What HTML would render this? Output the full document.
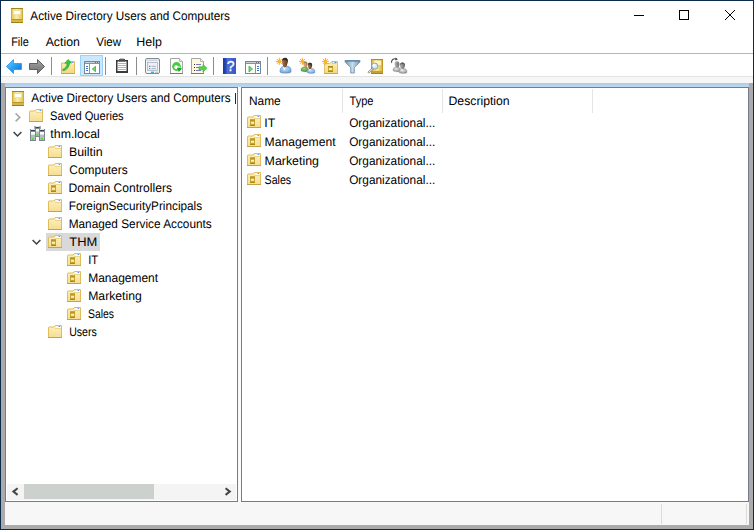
<!DOCTYPE html>
<html><head><meta charset="utf-8"><title>Active Directory Users and Computers</title>
<style>
html,body{margin:0;padding:0;background:#fff;}
body{width:754px;height:530px;position:relative;overflow:hidden;font-family:"Liberation Sans",sans-serif;font-size:12px;color:#000;}
.abs{position:absolute;}
.t{position:absolute;white-space:nowrap;font-size:12.4px;line-height:14px;height:14px;transform-origin:0 0;display:block;text-rendering:geometricPrecision;}
svg{position:absolute;overflow:visible;}
</style></head><body>

<div class="abs" style="left:0;top:0;width:754px;height:530px;background:#0b2b4a;"></div>
<div class="abs" style="left:1px;top:1px;width:752px;height:528px;background:#fff;"></div>
<div class="abs" style="left:1px;top:53px;width:752px;height:1px;background:#b4b8b8;"></div>
<div class="abs" style="left:1px;top:76px;width:752px;height:1px;background:#e2e4e2;"></div>
<div class="abs" style="left:1px;top:77px;width:752px;height:6px;background:#f6f6f6;"></div>
<div class="abs" style="left:1px;top:83px;width:752px;height:446px;background:#ababab;"></div>
<div class="abs" style="left:5px;top:83px;width:744px;height:4px;background:linear-gradient(#aacde9,#bdd8f3);"></div>
<div class="abs" style="left:5px;top:87px;width:744px;height:438px;background:#f7f7f7;"></div>
<div class="abs" style="left:238px;top:87px;width:3px;height:414px;background:#fbfbfb;"></div>
<div class="abs" style="left:5px;top:87px;width:233px;height:415px;background:#fff;border:1px solid #767b8c;box-sizing:border-box;"></div>
<div class="abs" style="left:241px;top:87px;width:508px;height:415px;background:#fff;border:1px solid #767b8c;box-sizing:border-box;"></div>
<div class="abs" style="left:661px;top:504px;width:1px;height:20px;background:#d9dcd9;"></div>
<div class="abs" style="left:746px;top:504px;width:1px;height:20px;background:#d9dcd9;"></div>
<svg style="left:11px;top:8px" width="12" height="15" viewBox="0 0 12 15"><defs><linearGradient id="bk" x1="0" y1="0" x2="1" y2="0"><stop offset="0" stop-color="#e4cc5e"/><stop offset="0.45" stop-color="#f8eeaa"/><stop offset="1" stop-color="#e2c858"/></linearGradient></defs><rect x="0" y="0" width="12" height="15" fill="#cfae3c"/><rect x="0" y="0" width="12" height="1" fill="#a5821a"/><rect x="1" y="1" width="10" height="10" fill="url(#bk)"/><rect x="2.5" y="2.5" width="7" height="4" fill="#ffffff" stroke="#efe2a0" stroke-width="1"/><rect x="0.5" y="11" width="11" height="1" fill="#b8962a"/><rect x="1" y="12" width="10" height="2" fill="#d6b646"/><rect x="0" y="14" width="12" height="1" fill="#a08018"/></svg>
<span class="t" style="left:30px;top:9px;transform:translateX(0.37px) scaleX(0.9474);">Active Directory Users and Computers</span>
<svg style="left:633px;top:9px" width="110" height="14" viewBox="0 0 110 14"><g fill="none" stroke="#000" stroke-width="1"><path d="M1 6.5H11"/><rect x="46.5" y="1.5" width="9" height="9"/><path d="M92 1L102 11M102 1L92 11"/></g></svg>
<span class="t" style="left:11px;top:35px;transform:translateX(0.20px) scaleX(0.8786);">File</span>
<span class="t" style="left:45px;top:35px;transform:translateX(0.66px) scaleX(0.9929);">Action</span>
<span class="t" style="left:96px;top:35px;transform:translateX(0.15px) scaleX(0.9329);">View</span>
<span class="t" style="left:136px;top:35px;transform:translateX(0.30px) scaleX(1.0051);">Help</span>
<svg style="left:0;top:54px" width="754" height="23" viewBox="0 54 754 23">
<defs>
<linearGradient id="gb" x1="0" y1="0" x2="1" y2="1"><stop offset="0" stop-color="#7ad0ff"/><stop offset="0.5" stop-color="#28a0f4"/><stop offset="1" stop-color="#0868cc"/></linearGradient>
<linearGradient id="gg" x1="0" y1="0" x2="0" y2="1"><stop offset="0" stop-color="#a8a8a8"/><stop offset="0.5" stop-color="#8a8a8a"/><stop offset="1" stop-color="#707070"/></linearGradient>
<linearGradient id="gf" x1="0" y1="0" x2="0" y2="1"><stop offset="0" stop-color="#fdf0b8"/><stop offset="1" stop-color="#f1d780"/></linearGradient>
<linearGradient id="gh" x1="0" y1="0" x2="1" y2="0"><stop offset="0" stop-color="#1b3a9c"/><stop offset="0.25" stop-color="#2a4cb8"/><stop offset="0.3" stop-color="#4f70d6"/><stop offset="1" stop-color="#3558c8"/></linearGradient>
<linearGradient id="gfu" x1="0" y1="0" x2="1" y2="0"><stop offset="0" stop-color="#6f95b4"/><stop offset="0.5" stop-color="#c8dcea"/><stop offset="1" stop-color="#6f95b4"/></linearGradient>
<linearGradient id="gbk" x1="0" y1="0" x2="1" y2="0"><stop offset="0" stop-color="#d9b640"/><stop offset="0.5" stop-color="#f7e79a"/><stop offset="1" stop-color="#d9b640"/></linearGradient>
</defs>
<rect x="51" y="57" width="1" height="18" fill="#8c8c8c"/>
<rect x="105" y="57" width="1" height="18" fill="#8c8c8c"/>
<rect x="136" y="57" width="1" height="18" fill="#8c8c8c"/>
<rect x="213" y="57" width="1" height="18" fill="#8c8c8c"/>
<rect x="267" y="57" width="1" height="18" fill="#8c8c8c"/>
<path d="M6.5 66.5L13.5 59.5V63.5H21.5V69.5H13.5V73.5Z" fill="url(#gb)" stroke="#3aa0f0" stroke-width="1" stroke-linejoin="round"/>
<path d="M44.5 66.5L37.5 59.5V63.5H29.5V69.5H37.5V73.5Z" fill="url(#gg)" stroke="#606060" stroke-width="1" stroke-linejoin="round"/>
<path d="M61.5 63H67.5L69 61.5H74.5V73.5H61.5Z" fill="url(#gf)" stroke="#e0bc60" stroke-width="1"/><rect x="61" y="73" width="14" height="1" fill="#cfa848"/>
<rect x="70.5" y="62" width="3" height="1.5" fill="#fff"/><rect x="72" y="62" width="1.5" height="1" fill="#5a9cf0"/>
<path d="M62.6 69.4C65.4 68.4 66.9 66.4 67.2 63.3H64.8L68 59.4L71.7 63H69.6C69.3 67 66.8 70 63 70.8Z" fill="#3cc43c" stroke="#2a9e2a" stroke-width="0.6"/>
<rect x="80.5" y="55.5" width="22" height="20" fill="#cce8ff" stroke="#99d1ff" stroke-width="1"/>
<rect x="84.5" y="61.5" width="15" height="12" fill="#fff" stroke="#7a8692" stroke-width="1"/>
<rect x="85" y="62" width="14" height="1" fill="#c8ced6"/><rect x="85" y="63" width="14" height="1" fill="#8a94a0"/><rect x="95" y="62" width="1" height="1" fill="#6a7480"/><rect x="97" y="62" width="1" height="1" fill="#6a7480"/>
<rect x="89" y="64" width="1" height="9" fill="#8a96a2"/>
<rect x="86" y="66" width="2" height="1" fill="#3a78d0"/><rect x="86" y="68" width="2" height="1" fill="#3a78d0"/><rect x="86" y="70" width="2" height="1" fill="#3a78d0"/>
<path d="M95.5 66.3V71.7L92.3 69Z" fill="#7ed27e" stroke="#36b036" stroke-width="0.8"/>
<rect x="116.75" y="60.75" width="10.5" height="11.5" fill="#fff" stroke="#3a3a3a" stroke-width="1.5"/>
<rect x="117" y="71" width="10" height="1.6" fill="#3a3a3a"/>
<rect x="119" y="59" width="6" height="2.4" fill="#4a4a4a"/><rect x="120" y="58.6" width="4" height="1" fill="#6a6a6a"/>
<g fill="#b4b4b4"><rect x="118" y="63" width="8" height="1"/><rect x="118" y="65" width="8" height="1"/><rect x="118" y="67" width="8" height="1"/><rect x="118" y="69" width="8" height="1"/></g>
<rect x="145.5" y="58.5" width="14" height="15" rx="1.5" fill="#f4f6f8" stroke="#808a96" stroke-width="1"/>
<rect x="146.5" y="59.5" width="12" height="1.6" fill="#d0d6de"/>
<rect x="147.5" y="62.5" width="10" height="8" fill="#eef1f5" stroke="#aab2be" stroke-width="0.8"/>
<rect x="149" y="65.7" width="1.3" height="1.3" fill="#1e90ff"/><rect x="149" y="68" width="1.3" height="1.3" fill="#909090"/>
<rect x="151.5" y="65.8" width="4.5" height="1" fill="#a8b0bc"/><rect x="151.5" y="68.1" width="4.5" height="1" fill="#a8b0bc"/>
<rect x="151" y="71.6" width="3" height="1.4" fill="#20b8f0"/><rect x="155" y="71.6" width="3" height="1.4" fill="#c8c8c8"/>
<path d="M170.5 58.5H179.5L182.5 61.5V73.5H170.5Z" fill="#fff" stroke="#a4a4a4" stroke-width="1"/><path d="M179.5 58.5V61.5H182.5" fill="#f0f0f0" stroke="#a4a4a4" stroke-width="0.8"/><rect x="170" y="73" width="13" height="1" fill="#7a7a7a"/>
<circle cx="176.5" cy="66.5" r="4.4" fill="#44cc44"/><circle cx="176.2" cy="67.2" r="1.9" fill="#fff"/><path d="M178.3 66.2L180 66.6L179.5 68L178 67.6Z" fill="#fff"/><path d="M177 67.6L182.2 68.6L178.8 72Z" fill="#1fa21f"/>
<path d="M191.5 58.5H200.5L203.5 61.5V73.5H191.5Z" fill="#fdf9de" stroke="#a4a4a4" stroke-width="1"/><path d="M200.5 58.5V61.5H203.5" fill="#f0f0f0" stroke="#a4a4a4" stroke-width="0.8"/><rect x="191" y="73" width="13" height="1" fill="#7a7a7a"/>
<g fill="#303030"><rect x="194" y="64" width="1" height="1"/><rect x="194" y="67" width="1" height="1"/><rect x="194" y="70" width="1" height="1"/></g>
<g fill="#7878c0"><rect x="196" y="64" width="5" height="1"/><rect x="196" y="67" width="5" height="1"/><rect x="196" y="70" width="5" height="1"/></g>
<path d="M199 66.7H203V64.5L207 68.2L203 72V69.8H199Z" fill="#5ad048" stroke="#35b030" stroke-width="0.6"/>
<rect x="223" y="58" width="13" height="16" fill="url(#gh)"/>
<text x="230.6" y="71.3" font-family="Liberation Sans, sans-serif" font-size="14" fill="#fff" text-anchor="middle" stroke="#fff" stroke-width="0.3">?</text>
<rect x="245.5" y="61.5" width="15" height="12" fill="#fff" stroke="#7a8692" stroke-width="1"/>
<rect x="246" y="62" width="14" height="1" fill="#c8ced6"/><rect x="246" y="63" width="14" height="1" fill="#8a94a0"/><rect x="256" y="62" width="1" height="1" fill="#6a7480"/><rect x="258" y="62" width="1" height="1" fill="#6a7480"/>
<rect x="255" y="64" width="1" height="9" fill="#8a96a2"/>
<rect x="257" y="66" width="2" height="1" fill="#3a78d0"/><rect x="257" y="68" width="2" height="1" fill="#3a78d0"/><rect x="257" y="70" width="2" height="1" fill="#3a78d0"/>
<path d="M249 66V72L252.5 69Z" fill="#7ed27e" stroke="#36b036" stroke-width="0.8"/>
<defs><radialGradient id="rb" cx="0.45" cy="0.35" r="0.75"><stop offset="0" stop-color="#c4dcf6"/><stop offset="0.6" stop-color="#8ab6e6"/><stop offset="1" stop-color="#5a86be"/></radialGradient><radialGradient id="rg" cx="0.45" cy="0.35" r="0.75"><stop offset="0" stop-color="#9ad07a"/><stop offset="0.6" stop-color="#5fa848"/><stop offset="1" stop-color="#3a7a2c"/></radialGradient><linearGradient id="fc" x1="0" y1="0" x2="1" y2="0"><stop offset="0" stop-color="#b07a48"/><stop offset="1" stop-color="#5a3a22"/></linearGradient><linearGradient id="fc2" x1="0" y1="0" x2="1" y2="0"><stop offset="0" stop-color="#e8c090"/><stop offset="1" stop-color="#a87a50"/></linearGradient></defs>
<path d="M280 72C279.6 68.5 281.5 66.3 284 66.3H287.5C290.3 66.3 291.6 69 291 72C290.5 73.6 280.5 73.6 280 72Z" fill="url(#rb)" stroke="#5a88c0" stroke-width="0.5"/>
<path d="M283 66.8L284.3 71L285.8 66.8Z" fill="#fff"/>
<path d="M282 62C281.6 59.5 283 58 285 58C287.2 58 288 59.8 287.6 62.5C287.3 65 286.3 67.4 284.8 67.4C283.3 67.4 282.3 65 282 62Z" fill="url(#fc)"/>
<path d="M282.3 61C282 58.6 283.5 57.8 285.2 57.8C287.6 57.8 288.4 60 287.6 63.4C287.5 61 286.5 60 285 60C283.8 60 283 60.3 282.3 61Z" fill="#2c2c2c"/>
<g stroke="#f2a21c" stroke-width="0.9" stroke-linecap="round"><path d="M276.2 61.4H282.40000000000003M279.3 58.3V64.5M277.1 59.199999999999996L281.5 63.6M277.1 63.6L281.5 59.199999999999996"/></g><circle cx="279.3" cy="61.4" r="1.7" fill="#f8b430"/>
<path d="M301 70.6C300.8 68.3 302 67 304 67H306C307.5 67 308 68.5 308 71C307 72 302 72 301 70.6Z" fill="url(#rg)" stroke="#3f8a30" stroke-width="0.4"/>
<path d="M303.2 64C303 62.6 304 61.7 305.3 61.7C306.8 61.7 307.6 62.8 307.4 64.4C307.2 66 306.4 67.6 305.3 67.6C304.2 67.6 303.4 66 303.2 64Z" fill="url(#fc2)"/><path d="M303.2 63.6C303.2 62 304.2 61.5 305.4 61.5C306.8 61.5 307.7 62.6 307.4 64C306.8 63 305 62.6 303.2 63.6Z" fill="#a08040"/>
<path d="M307 72.2C306.7 70 307.8 68.7 309.5 68.7H312.2C314.2 68.7 315.2 70.3 314.8 72.4C314.3 73.7 307.5 73.7 307 72.2Z" fill="url(#rb)" stroke="#5a88c0" stroke-width="0.5"/>
<path d="M309.2 69L310 71.6L311 69Z" fill="#fff"/>
<path d="M307.8 65.5C307.6 64 308.6 63 310 63C311.5 63 312.3 64.2 312 66C311.8 67.6 311 69.2 310 69.2C309 69.2 308 67.4 307.8 65.5Z" fill="url(#fc)"/><path d="M307.9 65C307.7 63.4 308.8 62.8 310.1 62.8C311.8 62.8 312.6 64.2 312 66.6C311.9 65 311.2 64.3 310 64.3C309.2 64.3 308.5 64.5 307.9 65Z" fill="#2c2c2c"/>
<g stroke="#f2a21c" stroke-width="0.9" stroke-linecap="round"><path d="M299.29999999999995 61.4H305.5M302.4 58.3V64.5M300.2 59.199999999999996L304.59999999999997 63.6M300.2 63.6L304.59999999999997 59.199999999999996"/></g><circle cx="302.4" cy="61.4" r="1.7" fill="#f8b430"/>
<path d="M324.5 63.5H330L331.5 61.5H337.5V73.5H324.5Z" fill="url(#gf)" stroke="#e2c064" stroke-width="1"/><rect x="324" y="73" width="14" height="1" fill="#cfa848"/>
<rect x="332.5" y="61.8" width="4" height="1.8" fill="#fff" stroke="#8aa0c0" stroke-width="0.5"/><rect x="334.5" y="62" width="1.5" height="1" fill="#4a90e8"/>
<rect x="328" y="66" width="5" height="6" fill="#c8a428"/><rect x="328" y="66" width="5" height="1" fill="#a88a18"/><rect x="328" y="71" width="5" height="1" fill="#a88a18"/><rect x="329" y="68" width="3" height="2" fill="#fbf3b8"/>
<g stroke="#f2a21c" stroke-width="0.9" stroke-linecap="round"><path d="M322.29999999999995 61.4H328.5M325.4 58.3V64.5M323.2 59.199999999999996L327.59999999999997 63.6M323.2 63.6L327.59999999999997 59.199999999999996"/></g><circle cx="325.4" cy="61.4" r="1.7" fill="#f8b430"/>
<path d="M345 60.5H360V62L354.3 67.5V73H350.7V67.5L345 62Z" fill="url(#gfu)" stroke="#6a8cab" stroke-width="0.8"/>
<rect x="345.5" y="60.3" width="14" height="1.4" fill="#5f86a8"/>
<rect x="371.5" y="59.5" width="11" height="14" fill="url(#gbk)" stroke="#c09a24" stroke-width="1"/><rect x="371" y="59" width="12" height="1" fill="#b08c1c"/>
<rect x="374" y="61" width="7" height="4" fill="#fbf3c0"/><rect x="372" y="71" width="10" height="2" fill="#c9a030"/><rect x="371" y="73" width="12" height="1" fill="#a88418"/>
<path d="M368.8 72.2L372.6 68.8" stroke="#8a8a90" stroke-width="2.2" stroke-linecap="round"/><path d="M368.9 72.1L372.5 68.9" stroke="#f0f0f4" stroke-width="1" stroke-linecap="round"/>
<circle cx="374.8" cy="66.1" r="3" fill="#d8ecf8" stroke="#98a0a8" stroke-width="1"/><circle cx="374" cy="65.2" r="1.4" fill="#f4fbff"/>
<defs><radialGradient id="ry" cx="0.45" cy="0.35" r="0.75"><stop offset="0" stop-color="#e4e4e4"/><stop offset="0.6" stop-color="#b0b0b0"/><stop offset="1" stop-color="#808080"/></radialGradient><linearGradient id="fy" x1="0" y1="0" x2="1" y2="0"><stop offset="0" stop-color="#b8b8b8"/><stop offset="1" stop-color="#6a6a6a"/></linearGradient></defs>
<g transform="translate(92 0)">
<path d="M301 70.6C300.8 68.3 302 67 304 67H306C307.5 67 308 68.5 308 71C307 72 302 72 301 70.6Z" fill="url(#ry)" stroke="#808080" stroke-width="0.4"/>
<path d="M302.6 64C302.4 62.4 303.6 61.3 305 61.3C306.6 61.3 307.6 62.6 307.4 64.4C307.2 66 306.4 67.6 305 67.6C303.8 67.6 302.8 66 302.6 64Z" fill="url(#fy)"/>
<path d="M307 72.2C306.7 70 307.8 68.7 309.5 68.7H312.2C314.2 68.7 315.2 70.3 314.8 72.4C314.3 73.7 307.5 73.7 307 72.2Z" fill="url(#ry)" stroke="#858585" stroke-width="0.5"/>
<path d="M309.2 69L310 71.6L311 69Z" fill="#fff"/>
<path d="M307.8 65.5C307.6 63.8 308.8 62.6 310.4 62.6C312.2 62.6 313.2 64 312.9 66C312.6 67.8 311.6 69.2 310.4 69.2C309.2 69.2 308 67.4 307.8 65.5Z" fill="url(#fy)"/><path d="M308 65C307.8 63.2 309 62.4 310.5 62.4C312.4 62.4 313.4 64 312.8 66.6C312.6 65 311.8 64 310.4 64C309.4 64 308.6 64.4 308 65Z" fill="#5a5a5a"/>
</g>
<path d="M391.6 62.8C391 60 393.6 58 396.4 59" fill="none" stroke="#4a4a4a" stroke-width="1.1"/><path d="M395.6 57.4L398 59.6L395.2 60.6Z" fill="#4a4a4a"/>
</svg>
<svg style="left:12px;top:91px" width="12" height="15" viewBox="0 0 12 15"><defs><linearGradient id="bk" x1="0" y1="0" x2="1" y2="0"><stop offset="0" stop-color="#e4cc5e"/><stop offset="0.45" stop-color="#f8eeaa"/><stop offset="1" stop-color="#e2c858"/></linearGradient></defs><rect x="0" y="0" width="12" height="15" fill="#cfae3c"/><rect x="0" y="0" width="12" height="1" fill="#a5821a"/><rect x="1" y="1" width="10" height="10" fill="url(#bk)"/><rect x="2.5" y="2.5" width="7" height="4" fill="#ffffff" stroke="#efe2a0" stroke-width="1"/><rect x="0.5" y="11" width="11" height="1" fill="#b8962a"/><rect x="1" y="12" width="10" height="2" fill="#d6b646"/><rect x="0" y="14" width="12" height="1" fill="#a08018"/></svg>
<span class="t" style="left:31px;top:91px;transform:translateX(0.37px) scaleX(0.9450);">Active Directory Users and Computers</span>
<div class="abs" style="left:235px;top:93px;width:1px;height:11px;background:#4a104a;"></div>
<svg style="left:14px;top:112px" width="8" height="11" viewBox="0 0 8 11"><path d="M1.6 1.4L5.8 5.4L1.6 9.4" fill="none" stroke="#a6a6a6" stroke-width="1.5"/></svg>
<svg style="left:29px;top:109px" width="14" height="13" viewBox="0 0 14 13"><defs><linearGradient id="fo" x1="0" y1="0" x2="0" y2="1"><stop offset="0" stop-color="#fdf1c0"/><stop offset="1" stop-color="#f6de92"/></linearGradient></defs><path d="M0.5 2.6Q0.5 2 1.1 2H6L7.2 0.5H13.5V12.5H0.5Z" fill="url(#fo)" stroke="#e0bc5e" stroke-width="1"/><rect x="0" y="12" width="14" height="1" fill="#c9a244"/><rect x="8.5" y="1" width="4.5" height="2" fill="#fffdf0"/><rect x="10.6" y="1" width="1.6" height="1" fill="#5a9cf0"/><path d="M7 3.5H13" stroke="#ead080" stroke-width="0.8" fill="none"/></svg>
<span class="t" style="left:50px;top:109px;transform:translateX(0.08px) scaleX(0.8977);">Saved Queries</span>
<svg style="left:13px;top:131px" width="10" height="7" viewBox="0 0 10 7"><path d="M0.6 1L4.5 5L8.4 1" fill="none" stroke="#404040" stroke-width="1.5"/></svg>
<svg style="left:30px;top:126px" width="15" height="15" viewBox="0 0 15 15"><rect x="4.5" y="0" width="6" height="11" fill="#9aa2aa"/><rect x="5.0" y="0.5" width="5" height="10" fill="#b4bcc4" stroke="#7c868e" stroke-width="1"/><rect x="5.5" y="0" width="4" height="1" fill="#e4e8ea"/><rect x="5.5" y="1" width="4" height="1.4" fill="#3c444c"/><rect x="5.5" y="3" width="4" height="2.6" fill="#fbfcfc"/><rect x="6.5" y="8" width="2" height="2" fill="#58e030"/><rect x="0" y="3" width="6" height="12" fill="#9aa2aa"/><rect x="0.5" y="3.5" width="5" height="11" fill="#b4bcc4" stroke="#7c868e" stroke-width="1"/><rect x="1" y="3" width="4" height="1" fill="#e4e8ea"/><rect x="1" y="4" width="4" height="1.4" fill="#3c444c"/><rect x="1" y="6" width="4" height="2.6" fill="#fbfcfc"/><rect x="2" y="12" width="2" height="2" fill="#58e030"/><rect x="9" y="3" width="6" height="12" fill="#9aa2aa"/><rect x="9.5" y="3.5" width="5" height="11" fill="#b4bcc4" stroke="#7c868e" stroke-width="1"/><rect x="10" y="3" width="4" height="1" fill="#e4e8ea"/><rect x="10" y="4" width="4" height="1.4" fill="#3c444c"/><rect x="10" y="6" width="4" height="2.6" fill="#fbfcfc"/><rect x="11" y="12" width="2" height="2" fill="#58e030"/></svg>
<span class="t" style="left:50px;top:127px;transform:translateX(0.33px) scaleX(0.9969);">thm.local</span>
<svg style="left:48px;top:145px" width="14" height="13" viewBox="0 0 14 13"><defs><linearGradient id="fo" x1="0" y1="0" x2="0" y2="1"><stop offset="0" stop-color="#fdf1c0"/><stop offset="1" stop-color="#f6de92"/></linearGradient></defs><path d="M0.5 2.6Q0.5 2 1.1 2H6L7.2 0.5H13.5V12.5H0.5Z" fill="url(#fo)" stroke="#e0bc5e" stroke-width="1"/><rect x="0" y="12" width="14" height="1" fill="#c9a244"/><rect x="8.5" y="1" width="4.5" height="2" fill="#fffdf0"/><rect x="10.6" y="1" width="1.6" height="1" fill="#5a9cf0"/><path d="M7 3.5H13" stroke="#ead080" stroke-width="0.8" fill="none"/></svg>
<span class="t" style="left:68px;top:145px;transform:translateX(0.88px) scaleX(0.9977);">Builtin</span>
<svg style="left:48px;top:163px" width="14" height="13" viewBox="0 0 14 13"><defs><linearGradient id="fo" x1="0" y1="0" x2="0" y2="1"><stop offset="0" stop-color="#fdf1c0"/><stop offset="1" stop-color="#f6de92"/></linearGradient></defs><path d="M0.5 2.6Q0.5 2 1.1 2H6L7.2 0.5H13.5V12.5H0.5Z" fill="url(#fo)" stroke="#e0bc5e" stroke-width="1"/><rect x="0" y="12" width="14" height="1" fill="#c9a244"/><rect x="8.5" y="1" width="4.5" height="2" fill="#fffdf0"/><rect x="10.6" y="1" width="1.6" height="1" fill="#5a9cf0"/><path d="M7 3.5H13" stroke="#ead080" stroke-width="0.8" fill="none"/></svg>
<span class="t" style="left:69px;top:163px;transform:translateX(0.27px) scaleX(0.9641);">Computers</span>
<svg style="left:48px;top:181px" width="14" height="13" viewBox="0 0 14 13"><path d="M0.5 2.6Q0.5 2 1.1 2H6L7.2 0.5H13.5V12.5H0.5Z" fill="url(#fo)" stroke="#e0bc5e" stroke-width="1"/><rect x="0" y="12" width="14" height="1" fill="#c9a244"/><rect x="8.5" y="1" width="4.5" height="2" fill="#fffdf0"/><rect x="10.6" y="1" width="1.6" height="1" fill="#5a9cf0"/><path d="M7 3.5H13" stroke="#ead080" stroke-width="0.8" fill="none"/><rect x="3" y="4.5" width="5" height="6.5" fill="#c6a42e"/><rect x="3" y="4.5" width="5" height="1" fill="#a88a1c"/><rect x="3" y="10" width="5" height="1" fill="#a88a1c"/><rect x="4" y="6.8" width="3" height="2" fill="#fbf3b8"/></svg>
<span class="t" style="left:68px;top:181px;transform:translateX(0.61px) scaleX(0.9744);">Domain Controllers</span>
<svg style="left:48px;top:199px" width="14" height="13" viewBox="0 0 14 13"><defs><linearGradient id="fo" x1="0" y1="0" x2="0" y2="1"><stop offset="0" stop-color="#fdf1c0"/><stop offset="1" stop-color="#f6de92"/></linearGradient></defs><path d="M0.5 2.6Q0.5 2 1.1 2H6L7.2 0.5H13.5V12.5H0.5Z" fill="url(#fo)" stroke="#e0bc5e" stroke-width="1"/><rect x="0" y="12" width="14" height="1" fill="#c9a244"/><rect x="8.5" y="1" width="4.5" height="2" fill="#fffdf0"/><rect x="10.6" y="1" width="1.6" height="1" fill="#5a9cf0"/><path d="M7 3.5H13" stroke="#ead080" stroke-width="0.8" fill="none"/></svg>
<span class="t" style="left:68px;top:199px;transform:translateX(0.71px) scaleX(0.9496);">ForeignSecurityPrincipals</span>
<svg style="left:48px;top:217px" width="14" height="13" viewBox="0 0 14 13"><defs><linearGradient id="fo" x1="0" y1="0" x2="0" y2="1"><stop offset="0" stop-color="#fdf1c0"/><stop offset="1" stop-color="#f6de92"/></linearGradient></defs><path d="M0.5 2.6Q0.5 2 1.1 2H6L7.2 0.5H13.5V12.5H0.5Z" fill="url(#fo)" stroke="#e0bc5e" stroke-width="1"/><rect x="0" y="12" width="14" height="1" fill="#c9a244"/><rect x="8.5" y="1" width="4.5" height="2" fill="#fffdf0"/><rect x="10.6" y="1" width="1.6" height="1" fill="#5a9cf0"/><path d="M7 3.5H13" stroke="#ead080" stroke-width="0.8" fill="none"/></svg>
<span class="t" style="left:68px;top:217px;transform:translateX(0.72px) scaleX(0.9523);">Managed Service Accounts</span>
<div class="abs" style="left:46px;top:233px;width:54px;height:18px;background:#d9d9d9;"></div>
<svg style="left:32px;top:239px" width="10" height="7" viewBox="0 0 10 7"><path d="M0.6 1L4.5 5L8.4 1" fill="none" stroke="#404040" stroke-width="1.5"/></svg>
<svg style="left:48px;top:235px" width="14" height="13" viewBox="0 0 14 13"><path d="M0.5 2.6Q0.5 2 1.1 2H6L7.2 0.5H13.5V12.5H0.5Z" fill="url(#fo)" stroke="#e0bc5e" stroke-width="1"/><rect x="0" y="12" width="14" height="1" fill="#c9a244"/><rect x="8.5" y="1" width="4.5" height="2" fill="#fffdf0"/><rect x="10.6" y="1" width="1.6" height="1" fill="#5a9cf0"/><path d="M7 3.5H13" stroke="#ead080" stroke-width="0.8" fill="none"/><rect x="3" y="4.5" width="5" height="6.5" fill="#c6a42e"/><rect x="3" y="4.5" width="5" height="1" fill="#a88a1c"/><rect x="3" y="10" width="5" height="1" fill="#a88a1c"/><rect x="4" y="6.8" width="3" height="2" fill="#fbf3b8"/></svg>
<span class="t" style="left:69px;top:235px;transform:translateX(0.29px) scaleX(1.0413);">THM</span>
<svg style="left:67px;top:253px" width="14" height="13" viewBox="0 0 14 13"><path d="M0.5 2.6Q0.5 2 1.1 2H6L7.2 0.5H13.5V12.5H0.5Z" fill="url(#fo)" stroke="#e0bc5e" stroke-width="1"/><rect x="0" y="12" width="14" height="1" fill="#c9a244"/><rect x="8.5" y="1" width="4.5" height="2" fill="#fffdf0"/><rect x="10.6" y="1" width="1.6" height="1" fill="#5a9cf0"/><path d="M7 3.5H13" stroke="#ead080" stroke-width="0.8" fill="none"/><rect x="3" y="4.5" width="5" height="6.5" fill="#c6a42e"/><rect x="3" y="4.5" width="5" height="1" fill="#a88a1c"/><rect x="3" y="10" width="5" height="1" fill="#a88a1c"/><rect x="4" y="6.8" width="3" height="2" fill="#fbf3b8"/></svg>
<span class="t" style="left:88px;top:253px;transform:translateX(0.15px) scaleX(0.9044);">IT</span>
<svg style="left:67px;top:271px" width="14" height="13" viewBox="0 0 14 13"><path d="M0.5 2.6Q0.5 2 1.1 2H6L7.2 0.5H13.5V12.5H0.5Z" fill="url(#fo)" stroke="#e0bc5e" stroke-width="1"/><rect x="0" y="12" width="14" height="1" fill="#c9a244"/><rect x="8.5" y="1" width="4.5" height="2" fill="#fffdf0"/><rect x="10.6" y="1" width="1.6" height="1" fill="#5a9cf0"/><path d="M7 3.5H13" stroke="#ead080" stroke-width="0.8" fill="none"/><rect x="3" y="4.5" width="5" height="6.5" fill="#c6a42e"/><rect x="3" y="4.5" width="5" height="1" fill="#a88a1c"/><rect x="3" y="10" width="5" height="1" fill="#a88a1c"/><rect x="4" y="6.8" width="3" height="2" fill="#fbf3b8"/></svg>
<span class="t" style="left:88px;top:271px;transform:translateX(0.22px) scaleX(0.9658);">Management</span>
<svg style="left:67px;top:289px" width="14" height="13" viewBox="0 0 14 13"><path d="M0.5 2.6Q0.5 2 1.1 2H6L7.2 0.5H13.5V12.5H0.5Z" fill="url(#fo)" stroke="#e0bc5e" stroke-width="1"/><rect x="0" y="12" width="14" height="1" fill="#c9a244"/><rect x="8.5" y="1" width="4.5" height="2" fill="#fffdf0"/><rect x="10.6" y="1" width="1.6" height="1" fill="#5a9cf0"/><path d="M7 3.5H13" stroke="#ead080" stroke-width="0.8" fill="none"/><rect x="3" y="4.5" width="5" height="6.5" fill="#c6a42e"/><rect x="3" y="4.5" width="5" height="1" fill="#a88a1c"/><rect x="3" y="10" width="5" height="1" fill="#a88a1c"/><rect x="4" y="6.8" width="3" height="2" fill="#fbf3b8"/></svg>
<span class="t" style="left:88px;top:289px;transform:translateX(0.21px) scaleX(0.9832);">Marketing</span>
<svg style="left:67px;top:307px" width="14" height="13" viewBox="0 0 14 13"><path d="M0.5 2.6Q0.5 2 1.1 2H6L7.2 0.5H13.5V12.5H0.5Z" fill="url(#fo)" stroke="#e0bc5e" stroke-width="1"/><rect x="0" y="12" width="14" height="1" fill="#c9a244"/><rect x="8.5" y="1" width="4.5" height="2" fill="#fffdf0"/><rect x="10.6" y="1" width="1.6" height="1" fill="#5a9cf0"/><path d="M7 3.5H13" stroke="#ead080" stroke-width="0.8" fill="none"/><rect x="3" y="4.5" width="5" height="6.5" fill="#c6a42e"/><rect x="3" y="4.5" width="5" height="1" fill="#a88a1c"/><rect x="3" y="10" width="5" height="1" fill="#a88a1c"/><rect x="4" y="6.8" width="3" height="2" fill="#fbf3b8"/></svg>
<span class="t" style="left:88px;top:307px;transform:translateX(0.10px) scaleX(0.8371);">Sales</span>
<svg style="left:48px;top:325px" width="14" height="13" viewBox="0 0 14 13"><defs><linearGradient id="fo" x1="0" y1="0" x2="0" y2="1"><stop offset="0" stop-color="#fdf1c0"/><stop offset="1" stop-color="#f6de92"/></linearGradient></defs><path d="M0.5 2.6Q0.5 2 1.1 2H6L7.2 0.5H13.5V12.5H0.5Z" fill="url(#fo)" stroke="#e0bc5e" stroke-width="1"/><rect x="0" y="12" width="14" height="1" fill="#c9a244"/><rect x="8.5" y="1" width="4.5" height="2" fill="#fffdf0"/><rect x="10.6" y="1" width="1.6" height="1" fill="#5a9cf0"/><path d="M7 3.5H13" stroke="#ead080" stroke-width="0.8" fill="none"/></svg>
<span class="t" style="left:69px;top:325px;transform:translateX(0.18px) scaleX(0.8543);">Users</span>
<div class="abs" style="left:7px;top:484px;width:229px;height:16px;background:#f4f4f4;"></div>
<div class="abs" style="left:24px;top:484px;width:130px;height:15px;background:#cdd1ce;"></div>
<svg style="left:0;top:484px" width="240" height="16" viewBox="0 484 240 16"><g fill="none" stroke="#454545" stroke-width="2"><path d="M17.6 488.3L13.4 491.6L17.6 494.9"/><path d="M225.6 488.3L229.8 491.6L225.6 494.9"/></g></svg>
<div class="abs" style="left:342px;top:89px;width:1px;height:24px;background:#e5e5e5;"></div>
<div class="abs" style="left:442px;top:89px;width:1px;height:24px;background:#e5e5e5;"></div>
<div class="abs" style="left:592px;top:89px;width:1px;height:24px;background:#e5e5e5;"></div>
<span class="t" style="left:248px;top:94px;transform:translateX(0.97px) scaleX(0.9598);">Name</span>
<span class="t" style="left:349px;top:94px;transform:translateX(0.56px) scaleX(0.8890);">Type</span>
<span class="t" style="left:448px;top:94px;transform:translateX(0.54px) scaleX(0.9862);">Description</span>
<svg style="left:247px;top:115px" width="14" height="13" viewBox="0 0 14 13"><path d="M0.5 2.6Q0.5 2 1.1 2H6L7.2 0.5H13.5V12.5H0.5Z" fill="url(#fo)" stroke="#e0bc5e" stroke-width="1"/><rect x="0" y="12" width="14" height="1" fill="#c9a244"/><rect x="8.5" y="1" width="4.5" height="2" fill="#fffdf0"/><rect x="10.6" y="1" width="1.6" height="1" fill="#5a9cf0"/><path d="M7 3.5H13" stroke="#ead080" stroke-width="0.8" fill="none"/><rect x="3" y="4.5" width="5" height="6.5" fill="#c6a42e"/><rect x="3" y="4.5" width="5" height="1" fill="#a88a1c"/><rect x="3" y="10" width="5" height="1" fill="#a88a1c"/><rect x="4" y="6.8" width="3" height="2" fill="#fbf3b8"/></svg>
<span class="t" style="left:264px;top:116px;transform:translateX(0.36px) scaleX(0.9916);">IT</span>
<span class="t" style="left:349px;top:116px;transform:translateX(0.18px) scaleX(0.9537);">Organizational...</span>
<svg style="left:247px;top:134px" width="14" height="13" viewBox="0 0 14 13"><path d="M0.5 2.6Q0.5 2 1.1 2H6L7.2 0.5H13.5V12.5H0.5Z" fill="url(#fo)" stroke="#e0bc5e" stroke-width="1"/><rect x="0" y="12" width="14" height="1" fill="#c9a244"/><rect x="8.5" y="1" width="4.5" height="2" fill="#fffdf0"/><rect x="10.6" y="1" width="1.6" height="1" fill="#5a9cf0"/><path d="M7 3.5H13" stroke="#ead080" stroke-width="0.8" fill="none"/><rect x="3" y="4.5" width="5" height="6.5" fill="#c6a42e"/><rect x="3" y="4.5" width="5" height="1" fill="#a88a1c"/><rect x="3" y="10" width="5" height="1" fill="#a88a1c"/><rect x="4" y="6.8" width="3" height="2" fill="#fbf3b8"/></svg>
<span class="t" style="left:264px;top:135px;transform:translateX(0.58px) scaleX(0.9809);">Management</span>
<span class="t" style="left:349px;top:135px;transform:translateX(0.18px) scaleX(0.9537);">Organizational...</span>
<svg style="left:247px;top:153px" width="14" height="13" viewBox="0 0 14 13"><path d="M0.5 2.6Q0.5 2 1.1 2H6L7.2 0.5H13.5V12.5H0.5Z" fill="url(#fo)" stroke="#e0bc5e" stroke-width="1"/><rect x="0" y="12" width="14" height="1" fill="#c9a244"/><rect x="8.5" y="1" width="4.5" height="2" fill="#fffdf0"/><rect x="10.6" y="1" width="1.6" height="1" fill="#5a9cf0"/><path d="M7 3.5H13" stroke="#ead080" stroke-width="0.8" fill="none"/><rect x="3" y="4.5" width="5" height="6.5" fill="#c6a42e"/><rect x="3" y="4.5" width="5" height="1" fill="#a88a1c"/><rect x="3" y="10" width="5" height="1" fill="#a88a1c"/><rect x="4" y="6.8" width="3" height="2" fill="#fbf3b8"/></svg>
<span class="t" style="left:264px;top:154px;transform:translateX(0.59px) scaleX(0.9986);">Marketing</span>
<span class="t" style="left:349px;top:154px;transform:translateX(0.18px) scaleX(0.9537);">Organizational...</span>
<svg style="left:247px;top:172px" width="14" height="13" viewBox="0 0 14 13"><path d="M0.5 2.6Q0.5 2 1.1 2H6L7.2 0.5H13.5V12.5H0.5Z" fill="url(#fo)" stroke="#e0bc5e" stroke-width="1"/><rect x="0" y="12" width="14" height="1" fill="#c9a244"/><rect x="8.5" y="1" width="4.5" height="2" fill="#fffdf0"/><rect x="10.6" y="1" width="1.6" height="1" fill="#5a9cf0"/><path d="M7 3.5H13" stroke="#ead080" stroke-width="0.8" fill="none"/><rect x="3" y="4.5" width="5" height="6.5" fill="#c6a42e"/><rect x="3" y="4.5" width="5" height="1" fill="#a88a1c"/><rect x="3" y="10" width="5" height="1" fill="#a88a1c"/><rect x="4" y="6.8" width="3" height="2" fill="#fbf3b8"/></svg>
<span class="t" style="left:264px;top:173px;transform:translateX(0.55px) scaleX(0.8575);">Sales</span>
<span class="t" style="left:349px;top:173px;transform:translateX(0.18px) scaleX(0.9537);">Organizational...</span>
</body></html>
